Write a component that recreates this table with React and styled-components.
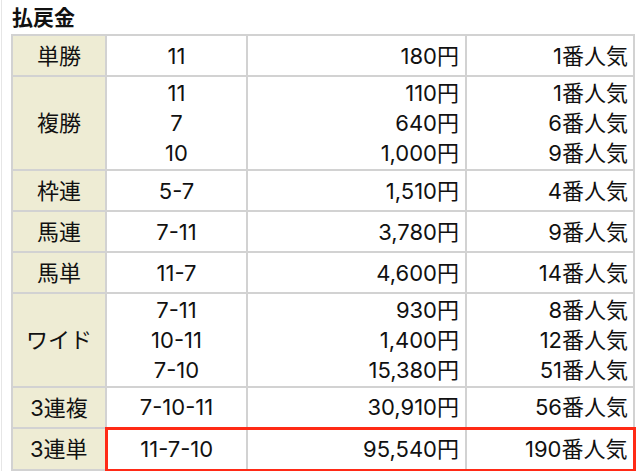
import styled, { createGlobalStyle } from 'styled-components';

const GlobalStyle = createGlobalStyle`
  body {
    margin: 0;
    background: #fff;
    font-family: Inter, "Noto Sans CJK JP", sans-serif;
    color: #111;
  }
`;

// --- 払戻金テーブル ---

const Page = styled.div`
  width: 640px;
  height: 471px;
  box-sizing: border-box;
  margin-left: 1px;
  border-left: 1px solid #e6e6e6;
  overflow: hidden;
`;

const Heading = styled.h2`
  margin: 0;
  padding: 3px 0 0 10px;
  font-family: "Noto Sans CJK JP", sans-serif;
  font-size: 21px;
  line-height: 27px;
  font-weight: bold;
`;

const Table = styled.table`
  margin: 4px 0 0 9px;
  width: 622px;
  border-collapse: collapse;
  table-layout: fixed;
  font-size: 22px;
  line-height: 30px;
`;

const Row = styled.tr`
  height: ${(p) => (p.$hit ? 42 : 41)}px;
`;

const Head = styled.th`
  padding: 0;
  background: #eeecd4;
  border: 2px solid #d2d2d2;
  font-weight: normal;
  text-align: center;
`;

const Cell = styled.td`
  padding: 1px ${(p) => p.$pad || 0}px 1px 0;
  border: 2px solid #d2d2d2;
  text-align: ${(p) => p.$align || 'center'};
  white-space: nowrap;

  ${(p) =>
    p.$hit &&
    `
    border-top: 3px solid #ff2a16;
    border-bottom: 3px solid #ff2a16;
  `}
  ${(p) => p.$hit && p.$first && `border-left: 3px solid #ff2a16;`}
  ${(p) => p.$hit && p.$last && `border-right: 3px solid #ff2a16;`}
`;

const Line = styled.div``;

const payouts = [
  { type: '単勝', items: [['11', '180円', '1番人気']] },
  {
    type: '複勝',
    items: [
      ['11', '110円', '1番人気'],
      ['7', '640円', '6番人気'],
      ['10', '1,000円', '9番人気'],
    ],
  },
  { type: '枠連', items: [['5-7', '1,510円', '4番人気']] },
  { type: '馬連', items: [['7-11', '3,780円', '9番人気']] },
  { type: '馬単', items: [['11-7', '4,600円', '14番人気']] },
  {
    type: 'ワイド',
    items: [
      ['7-11', '930円', '8番人気'],
      ['10-11', '1,400円', '12番人気'],
      ['7-10', '15,380円', '51番人気'],
    ],
  },
  { type: '3連複', items: [['7-10-11', '30,910円', '56番人気']] },
  { type: '3連単', items: [['11-7-10', '95,540円', '190番人気']], hit: true },
];

function App() {
  return (
    <Page>
      <GlobalStyle />
      <Heading>払戻金</Heading>
      <Table>
        <colgroup>
          <col style={{ width: 94 }} />
          <col style={{ width: 141 }} />
          <col style={{ width: 219 }} />
          <col style={{ width: 168 }} />
        </colgroup>
        <tbody>
          {payouts.map((row) => (
            <Row key={row.type} $hit={row.hit}>
              <Head>{row.type}</Head>
              <Cell $hit={row.hit} $first>
                {row.items.map((it, i) => (
                  <Line key={i}>{it[0]}</Line>
                ))}
              </Cell>
              <Cell $hit={row.hit} $align="right" $pad={6}>
                {row.items.map((it, i) => (
                  <Line key={i}>{it[1]}</Line>
                ))}
              </Cell>
              <Cell $hit={row.hit} $align="right" $pad={5} $last>
                {row.items.map((it, i) => (
                  <Line key={i}>{it[2]}</Line>
                ))}
              </Cell>
            </Row>
          ))}
        </tbody>
      </Table>
    </Page>
  );
}

export default App;
